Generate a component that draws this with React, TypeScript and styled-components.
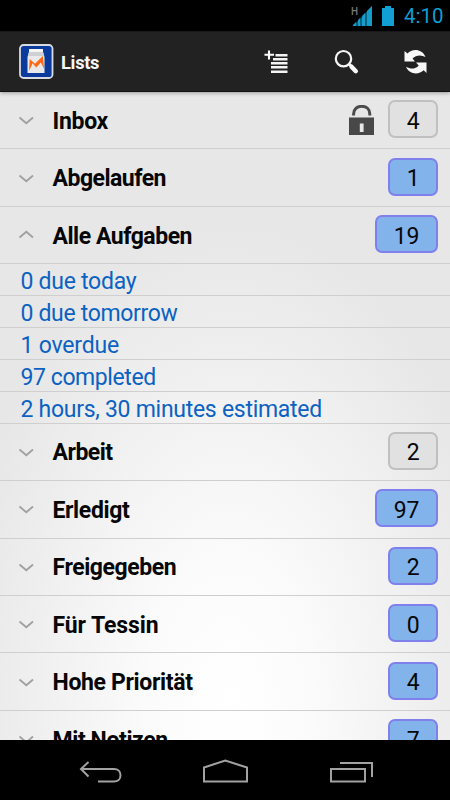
import React from 'react';
import styled, { createGlobalStyle } from 'styled-components';

const GlobalStyle = createGlobalStyle`
  * { box-sizing: border-box; }
  body { margin: 0; background: #000; font-family: Roboto, "Noto Sans", sans-serif; }
`;

const Screen = styled.div`
  width: 450px;
  height: 800px;
  display: flex;
  flex-direction: column;
  overflow: hidden;
  background: #000;
`;

const StatusBar = styled.div`
  height: 31px;
  flex: none;
  display: flex;
  justify-content: flex-end;
  align-items: flex-start;
  padding-right: 7px;
`;

const StatusIcons = styled.svg`
  width: 46px;
  height: 31px;
  margin-right: 7px;
`;

const NetworkType = styled.text`
  font-size: 10px;
  font-weight: 500;
  fill: #777;
`;

const Clock = styled.span`
  width: 39px;
  font-size: 20.5px;
  line-height: 33px;
  white-space: nowrap;
  color: #0d9fd3;
`;

const ActionBar = styled.header`
  height: 61px;
  flex: none;
  display: flex;
  align-items: center;
  background: #222;
  border-top: 1px solid #191919;
  border-bottom: 1px solid #141012;
  box-shadow: 0 1px 4px rgba(0, 0, 0, 0.35);
  z-index: 1;
`;

const AppIcon = styled.svg`
  width: 35px;
  height: 35px;
  margin: 0 7px 0 19px;
`;

const Title = styled.h1`
  flex: 1;
  margin: 1px 0 0;
  font-size: 18.3px;
  font-weight: 700;
  letter-spacing: -0.3px;
  color: #f6f6f6;
`;

const Action = styled.button`
  width: 70px;
  height: 59px;
  padding: 0;
  border: 0;
  background: none;
  display: flex;
  align-items: center;
  justify-content: center;
  &:last-child { width: 68px; }
`;

const ActionIcon = styled.svg`
  width: 26px;
  height: 26px;
`;

const Content = styled.main`
  flex: 1;
  min-height: 0;
  overflow: hidden;
  background: radial-gradient(ellipse 275px 480px at 230px 610px, #fff 0%, #fbfbfb 30%, #f1f1f1 65%, #e7e7e7 100%);
`;

const Row = styled.div`
  height: 57.43px;
  display: flex;
  align-items: center;
  padding: 0 12px 0 18px;
  border-bottom: 1px solid #cfcfcf;
`;

const Chevron = styled.svg<{ $open?: boolean }>`
  width: 17px;
  height: 10px;
  margin-right: 17.5px;
  transform: ${(p) => (p.$open ? 'translateY(-1px) scaleY(-1)' : 'translateY(1px)')};
`;

const Name = styled.span<{ $spacing: number }>`
  flex: 1;
  padding-top: 2px;
  font-size: 23px;
  font-weight: 700;
  letter-spacing: ${(p) => p.$spacing}px;
  color: #060606;
  white-space: nowrap;
`;

const Lock = styled.svg`
  width: 25px;
  height: 31px;
  margin-right: 14px;
`;

const Badge = styled.span<{ $wide: boolean; $smart: boolean }>`
  width: ${(p) => (p.$wide ? 63 : 50)}px;
  height: 38px;
  margin-top: -2px;
  display: flex;
  align-items: center;
  justify-content: center;
  padding-top: 4px;
  border: 2px solid ${(p) => (p.$smart ? '#8080ec' : '#c0c0c0')};
  border-radius: 7px;
  background: ${(p) => (p.$smart ? '#82b3eb' : '#e1e1e1')};
  font-size: 23px;
  letter-spacing: -0.3px;
  color: #080808;
`;

const Detail = styled.div<{ $spacing: number }>`
  height: 31.9px;
  padding: 2px 0 0 20.5px;
  border-bottom: 1px solid #cfcfcf;
  font-size: 23px;
  line-height: 31px;
  letter-spacing: ${(p) => p.$spacing}px;
  color: #0c62c2;
  white-space: nowrap;
`;

const NavBar = styled.nav`
  height: 60px;
  flex: none;
  display: flex;
  background: #000;
`;

const NavIcons = styled.svg`
  width: 450px;
  height: 60px;
`;

interface ListItem {
  name: string;
  count: number;
  smart?: boolean;
  locked?: boolean;
  details?: { text: string; spacing: number }[];
  spacing: number;
}

const lists: ListItem[] = [
  { name: 'Inbox', count: 4, locked: true, spacing: -0.3 },
  { name: 'Abgelaufen', count: 1, smart: true, spacing: -0.5 },
  {
    name: 'Alle Aufgaben', count: 19, smart: true, spacing: -0.47,
    details: [
      { text: '0 due today', spacing: -0.27 },
      { text: '0 due tomorrow', spacing: -0.33 },
      { text: '1 overdue', spacing: -0.2 },
      { text: '97 completed', spacing: -0.42 },
      { text: '2 hours, 30 minutes estimated', spacing: -0.28 },
    ],
  },
  { name: 'Arbeit', count: 2, spacing: -0.5 },
  { name: 'Erledigt', count: 97, smart: true, spacing: -0.37 },
  { name: 'Freigegeben', count: 2, smart: true, spacing: -0.42 },
  { name: 'Für Tessin', count: 0, smart: true, spacing: -0.1 },
  { name: 'Hohe Priorität', count: 4, smart: true, spacing: -0.34 },
  { name: 'Mit Notizen', count: 7, smart: true, spacing: -0.4 },
];

const ListRow = ({ item }: { item: ListItem }) => (
  <>
    <Row>
      <Chevron $open={!!item.details} viewBox="0 0 17 10">
        <path d="M1.5 1.5 8.3 7.3 15 1.5" fill="none" stroke="#a0a0a0" strokeWidth="1.8" />
      </Chevron>
      <Name $spacing={item.spacing}>{item.name}</Name>
      {item.locked && (
        <Lock viewBox="0 0 25 31">
          <path d="M4.6 10.5V9C4.6 4 8 1.3 12.7 1.3S20.8 4 20.8 9v1.5" fill="none" stroke="#4b4b4b" strokeWidth="3" />
          <path d="M0 12.5h25V30H0zM10.8 18.5V27h3.800v-8.500z" fill="#484848" fillRule="evenodd" />
        </Lock>
      )}
      <Badge $wide={item.count > 9} $smart={!!item.smart}>{item.count}</Badge>
    </Row>
    {item.details?.map((d) => <Detail key={d.text} $spacing={d.spacing}>{d.text}</Detail>)}
  </>
);

export default function App() {
  return (
    <>
      <GlobalStyle />
      <Screen>
        <StatusBar>
          <StatusIcons viewBox="352 0 46 31">
            <NetworkType x="352" y="15">H</NetworkType>
            <path d="M354 26 373 6V26Z" fill="#07617f" />
            <path d="M354 26v-1l3-3v4zM359 26v-6l2-2v8zM363 26V16l3-3v13zM368 26V11l5-5v20z" fill="#149cca" />
            <path d="M383 8h3V6h6v2h3v18h-12z" fill="#11a0d3" />
          </StatusIcons>
          <Clock>4:10</Clock>
        </StatusBar>
        <ActionBar>
          <AppIcon viewBox="0 0 35 35">
            <rect x="1" y="1" width="32.5" height="33" rx="3.5" fill="#0a3a9c" stroke="#d8dce2" strokeWidth="1.8" />
            <path d="M10 5h14v4H10z" fill="#f6f6f6" />
            <path d="M10 8h14l1.500 5v16H8.500V13z" fill="#e9e9eb" />
            <path d="M10 8h14l1.200 4H9z" fill="#cfd0d4" />
            <path d="m10 27 .7-12 5.300 4.800 7.800-7.800 1.400 13-3.400-6.500-4.600 5-3.600-4.200z" fill="#ff6811" />
          </AppIcon>
          <Title>Lists</Title>
          <Action aria-label="Add list">
            <ActionIcon viewBox="0 0 26 26">
              <path d="M5 1.500v9M.5 5.700h9.500" stroke="#fff" strokeWidth="2.100" />
              <path d="M11.500 6.300H23.500M9 10.300H23.500M7 14.300H23.500M7 18.300H23.500M7 22.700H23.500" stroke="#f4f4f4" strokeWidth="2.400" />
            </ActionIcon>
          </Action>
          <Action aria-label="Search">
            <ActionIcon viewBox="0 0 26 26">
              <circle cx="9.500" cy="9.700" r="7.700" fill="none" stroke="#f6f6f6" strokeWidth="2.200" />
              <path d="m15 15 2.500 2.500" stroke="#f6f6f6" strokeWidth="2.500" />
              <path d="m17.500 17.700 4.300 4.500" stroke="#f6f6f6" strokeWidth="4.500" strokeLinecap="round" />
            </ActionIcon>
          </Action>
          <Action aria-label="Refresh">
            <ActionIcon viewBox="0 0 26 26">
              <path d="M1.500 2 4.500 4.500C9-.5 19-.5 22.500 8 18 5.500 13 6 9.500 9.500L12 12.500H1.500z" fill="#f8f8f8" />
              <path d="M23.500 24 20.700 21.300C16 26 6.500 26 3 17.800 7.500 20.500 12.500 20.300 15.700 16.500L13 13.500H23.500z" fill="#f8f8f8" />
            </ActionIcon>
          </Action>
        </ActionBar>
        <Content>
          {lists.map((item) => <ListRow key={item.name} item={item} />)}
        </Content>
        <NavBar>
          <NavIcons viewBox="0 740 450 60" fill="none" stroke="#a2a2a2" strokeWidth="2">
            <path d="M88.500 762 81 769l7.500 7.500M81 769h33c4 0 6.500 2.500 6.500 6.200s-2.500 6.300-6.500 6.300H98" />
            <path d="M204 781.500V767.500L225.300 760.500 247 767.500V781.500Z" />
            <path d="M331 769h34v12.500h-34zM340 763h32v14" />
          </NavIcons>
        </NavBar>
      </Screen>
    </>
  );
}
